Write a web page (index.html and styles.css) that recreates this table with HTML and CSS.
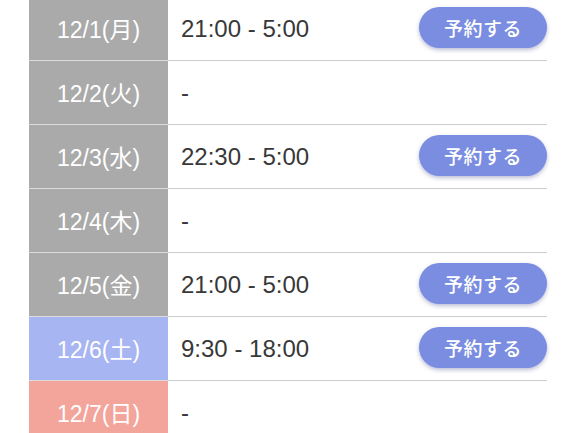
FILE: index.html
```html
<!DOCTYPE html>
<html lang="ja">
<head>
<meta charset="utf-8">
<link rel="stylesheet" href="styles.css">
</head>
<body>
<div class="schedule">
  <div class="row">
    <div class="day">12/1(月)</div>
    <div class="slot"><span class="time">21:00 - 5:00</span><button class="btn">予約する</button></div>
  </div>
  <div class="row">
    <div class="day">12/2(火)</div>
    <div class="slot"><span class="time">-</span></div>
  </div>
  <div class="row">
    <div class="day">12/3(水)</div>
    <div class="slot"><span class="time">22:30 - 5:00</span><button class="btn">予約する</button></div>
  </div>
  <div class="row">
    <div class="day">12/4(木)</div>
    <div class="slot"><span class="time">-</span></div>
  </div>
  <div class="row">
    <div class="day">12/5(金)</div>
    <div class="slot"><span class="time">21:00 - 5:00</span><button class="btn">予約する</button></div>
  </div>
  <div class="row">
    <div class="day sat">12/6(土)</div>
    <div class="slot"><span class="time">9:30 - 18:00</span><button class="btn">予約する</button></div>
  </div>
  <div class="row">
    <div class="day sun">12/7(日)</div>
    <div class="slot"><span class="time">-</span></div>
  </div>
</div>
</body>
</html>
```
FILE: styles.css
```css
html, body {
  margin: 0;
  padding: 0;
  background: #fff;
  overflow: hidden;
}
body {
  font-family: "Liberation Sans", "Noto Sans CJK JP", sans-serif;
}
.schedule {
  margin: -3px 0 0 29px;
  width: 518px;
}
.row {
  display: flex;
  height: 64px;
}
.day {
  width: 139px;
  flex: none;
  background: #aaaaaa;
  color: #fff;
  font-size: 23px;
  display: flex;
  align-items: center;
  justify-content: center;
  border-bottom: 1px solid #dcdcdc;
  box-sizing: border-box;
  padding-bottom: 1px;
}
.day.sat { background: #a7b5f2; }
.day.sun { background: #f3a49b; }
.slot {
  flex: 1;
  display: flex;
  align-items: center;
  justify-content: space-between;
  padding-left: 13px;
  border-bottom: 1px solid #cccccc;
  box-sizing: border-box;
}
.time {
  font-size: 24px;
  color: #383838;
}
.btn {
  width: 128px;
  height: 41px;
  border: none;
  border-radius: 21px;
  background: #7a8de0;
  color: #fff;
  font-family: "Noto Sans CJK JP", sans-serif;
  font-size: 19px;
  font-weight: 500;
  letter-spacing: 0.5px;
  box-shadow: 0 2px 4px rgba(60, 70, 140, 0.35);
  padding: 0;
  margin-bottom: 2px;
}
```
